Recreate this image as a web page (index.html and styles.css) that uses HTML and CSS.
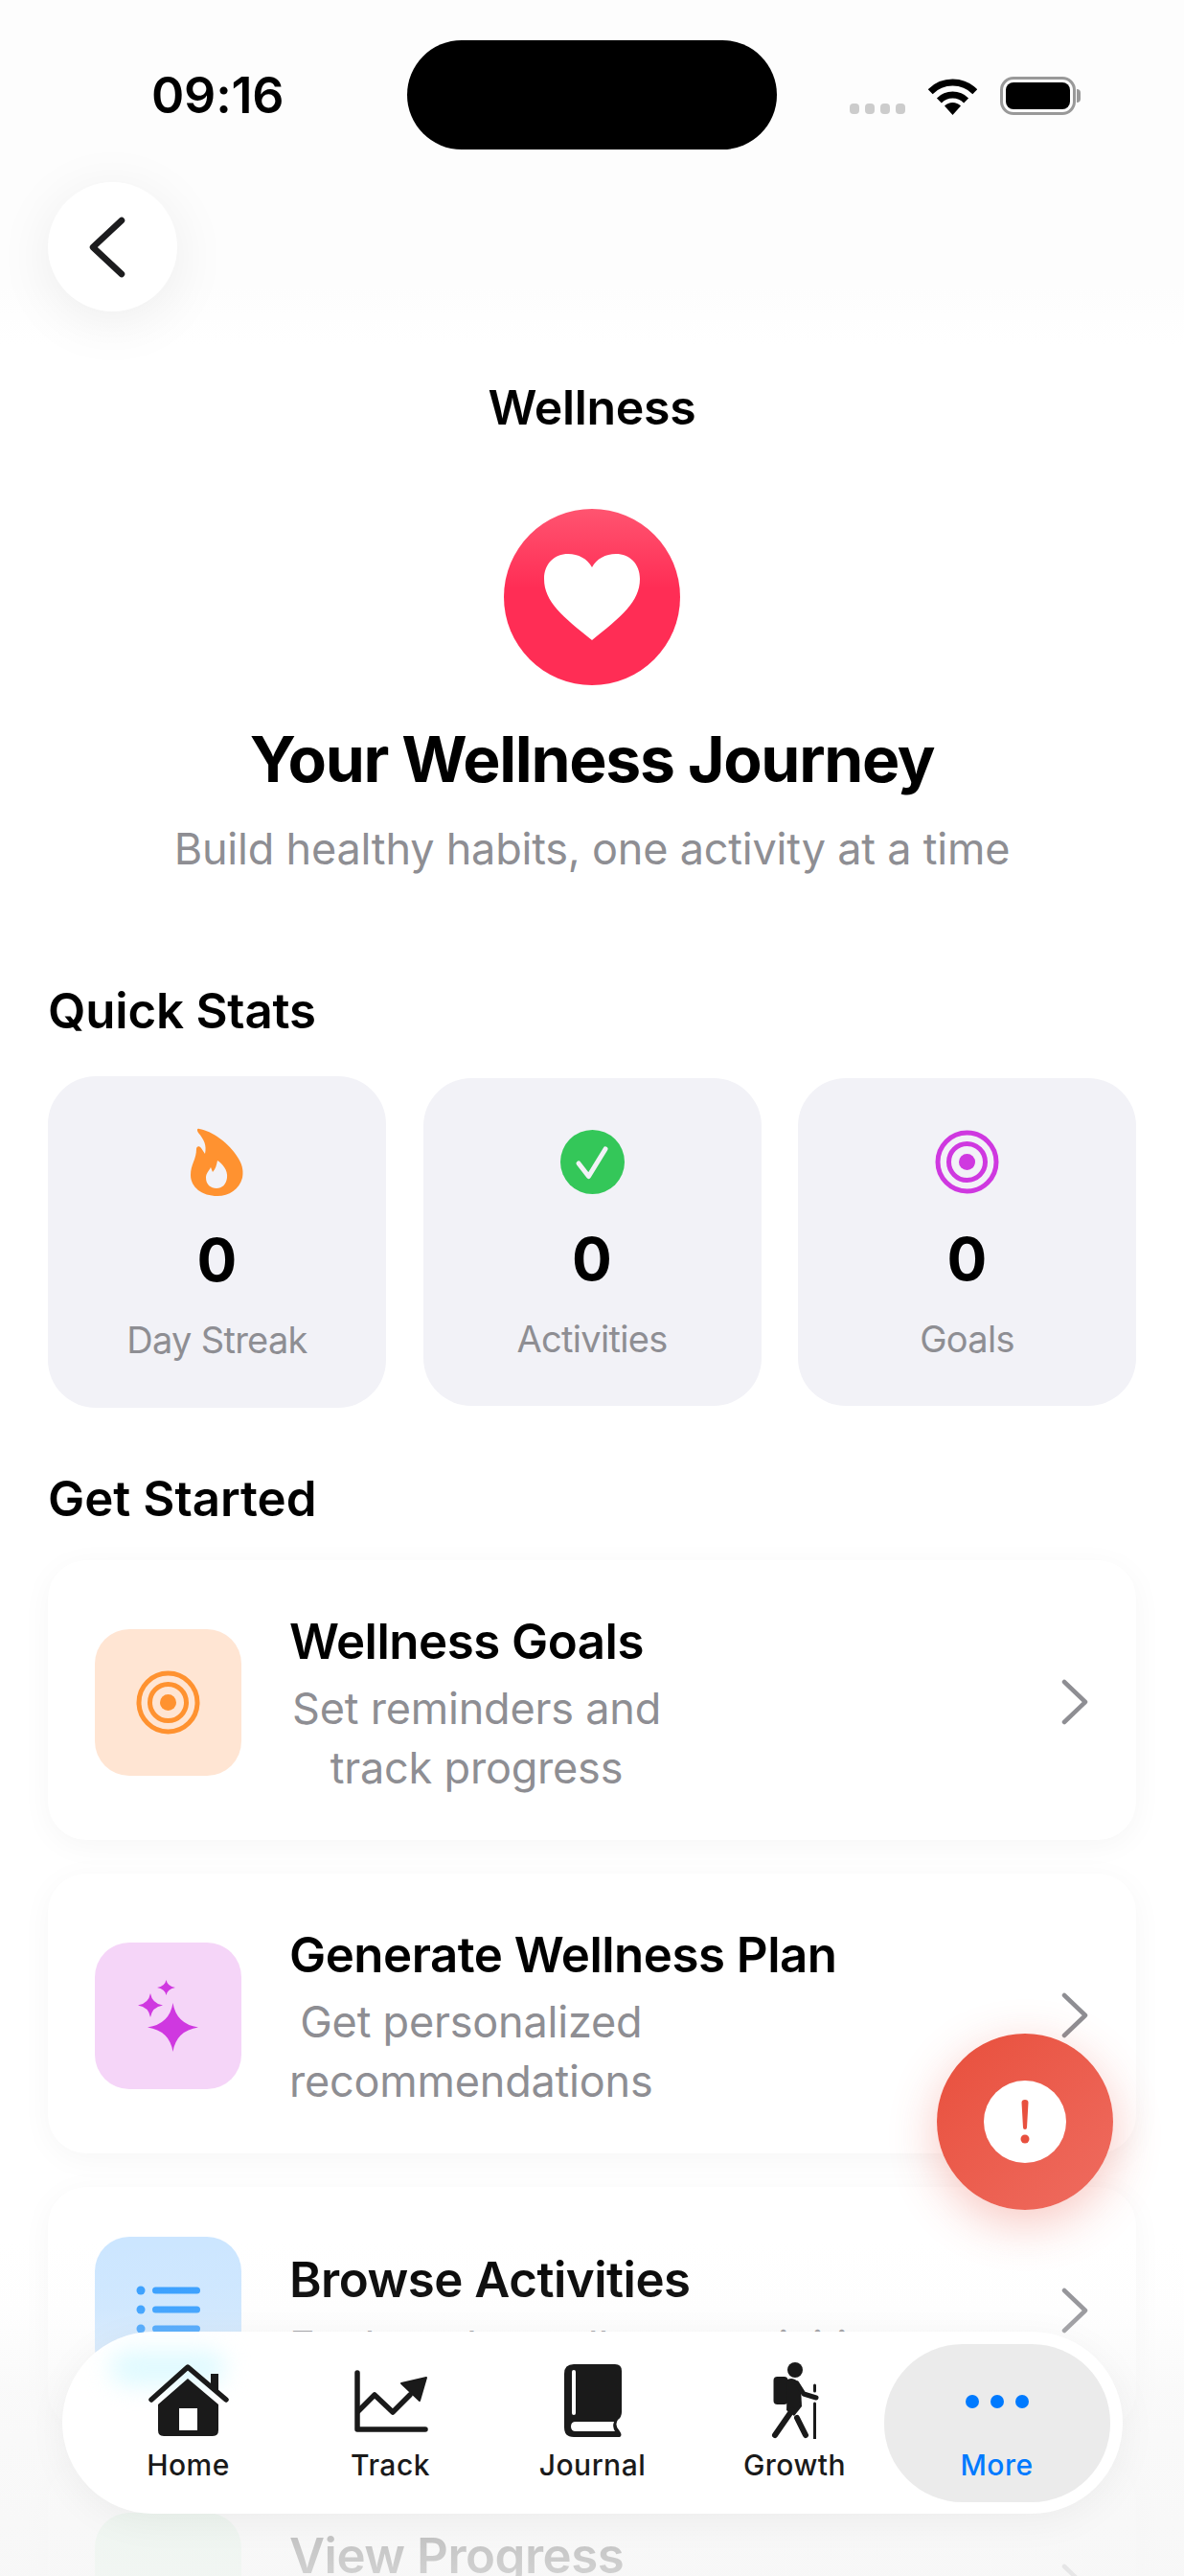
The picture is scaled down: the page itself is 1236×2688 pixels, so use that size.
FILE: index.html
```html
<!DOCTYPE html>
<html lang="en">
<head>
  <meta charset="UTF-8" />
  <meta name="viewport" content="width=device-width, initial-scale=1.0"/>
  <title>Wellness</title>
  <link rel="stylesheet" href="styles.css">
</head>
<body>
  <div class="screen">
    <!-- Status bar -->
    <header class="status">
      <span class="clock">09:16</span>
      <div class="island"></div>
      <div class="status-right">
        <div class="signal"><i></i><i></i><i></i><i></i></div>
        <svg class="wifi" width="51" height="38" viewBox="0 0 51 38">
          <path d="M2.2 13.7A33 33 0 0 1 48.8 13.7M11.4 22.9A20 20 0 0 1 39.6 22.9" fill="none" stroke="#000" stroke-width="7"/>
          <path d="M25.5 38L17 28.5A12 12 0 0 1 34 28.5Z" fill="#000"/>
        </svg>
        <div class="battery"><div class="battery-fill"></div></div>
      </div>
    </header>

    <button class="back" type="button" aria-label="Back">
      <svg width="40" height="66" viewBox="0 0 40 66">
        <path d="M34 5L4 33L34 61" fill="none" stroke="#1c1c1e" stroke-width="6.500" stroke-linecap="round" stroke-linejoin="round"/>
      </svg>
    </button>

    <h2 class="nav-title">Wellness</h2>

    <!-- Hero -->
    <section class="hero">
      <div class="hero-icon">
        <svg width="100" height="90" viewBox="0 0 100 90">
          <path d="M50 90C20 66 0 50 0 26C0 10 11 0 25 0C36 0 45 5 50 14C55 5 64 0 75 0C89 0 100 10 100 26C100 50 80 66 50 90Z" fill="#fff"/>
        </svg>
      </div>
      <h1>Your Wellness Journey</h1>
      <p>Build healthy habits, one activity at a time</p>
    </section>

    <!-- Quick stats -->
    <h3 class="section-title stats-title">Quick Stats</h3>
    <div class="stats">
      <div class="stat stat-first">
        <svg class="stat-icon" width="55" height="71" viewBox="0 0 55 71">
          <path fill="#ff9230" fill-rule="evenodd" d="M9 1C22 3 40 15 50 32C55 40 55 47 54 52C51 64 40 71 28 71C12 71 0 62 0 49C0 38 6 33 6 22C6 19 9 18 11 21L15 27C17 18 14 12 8 5C6 2 7 0 9 1ZM28 34C33 37 39 44 38 52C37 59 33 63 27 63C21 63 16 59 16 52C16 47 19 45 21 41L23 46C26 43 27 39 28 34Z"/>
        </svg>
        <strong>0</strong>
        <span>Day Streak</span>
      </div>
      <div class="stat">
        <svg class="stat-icon" width="67" height="67" viewBox="0 0 67 67">
          <circle cx="33.5" cy="33.5" r="33.5" fill="#34c759"/>
          <path d="M19 35L29.5 48.500L47 20" fill="none" stroke="#f2f2f7" stroke-width="5" stroke-linecap="round" stroke-linejoin="round"/>
        </svg>
        <strong>0</strong>
        <span>Activities</span>
      </div>
      <div class="stat">
        <svg class="stat-icon" width="67" height="67" viewBox="0 0 67 67">
          <circle cx="33.5" cy="33.5" r="30.500" fill="none" stroke="#cf38e0" stroke-width="5"/>
          <circle cx="33.5" cy="33.5" r="19" fill="none" stroke="#cf38e0" stroke-width="5"/>
          <circle cx="33.5" cy="33.5" r="8.500" fill="#cf38e0"/>
        </svg>
        <strong>0</strong>
        <span>Goals</span>
      </div>
    </div>

    <!-- Get started -->
    <h3 class="section-title started-title">Get Started</h3>
    <div class="cards">
      <a class="card">
        <div class="tile tile-orange">
          <svg width="67" height="67" viewBox="0 0 67 67">
            <circle cx="33.5" cy="33.5" r="30.500" fill="none" stroke="#ff9230" stroke-width="5"/>
            <circle cx="33.5" cy="33.5" r="19" fill="none" stroke="#ff9230" stroke-width="5"/>
            <circle cx="33.5" cy="33.5" r="8.500" fill="#ff9230"/>
          </svg>
        </div>
        <div class="card-text">
          <h4>Wellness Goals</h4>
          <p class="sub-wide">Set reminders and<br>track progress</p>
        </div>
        <svg class="chevron" width="28" height="48" viewBox="0 0 28 48">
          <path d="M3 3L25 24L3 45" fill="none" stroke="#8e8e93" stroke-width="4.500" stroke-linecap="round" stroke-linejoin="round"/>
        </svg>
      </a>

      <a class="card">
        <div class="tile tile-pink">
          <svg width="63" height="75" viewBox="0 0 63 75" fill="#cf38e0">
            <path d="M36.500 24Q40 46 63 49.500Q40 53 36.500 75Q33 53 10 49.500Q33 46 36.500 24Z"/>
            <path d="M13 14Q14.800 24.700 26 26.500Q14.800 28.300 13 39Q11.200 28.300 0 26.500Q11.200 24.700 13 14Z"/>
            <path d="M29.500 0Q30.800 6.700 39 8Q30.800 9.300 29.500 16Q28.200 9.300 20 8Q28.200 6.700 29.500 0Z"/>
          </svg>
        </div>
        <div class="card-text">
          <h4>Generate Wellness Plan</h4>
          <p>Get personalized<br>recommendations</p>
        </div>
        <svg class="chevron" width="28" height="48" viewBox="0 0 28 48">
          <path d="M3 3L25 24L3 45" fill="none" stroke="#8e8e93" stroke-width="4.500" stroke-linecap="round" stroke-linejoin="round"/>
        </svg>
      </a>

      <a class="card">
        <div class="tile tile-blue">
          <svg width="68" height="52" viewBox="0 0 68 52" fill="#2f9bff">
            <circle cx="5" cy="5" r="4.500"/><rect x="17" y="1.500" width="50" height="7" rx="3.500"/>
            <circle cx="5" cy="25" r="4.500"/><rect x="17" y="21.500" width="50" height="7" rx="3.500"/>
            <circle cx="5" cy="45" r="4.500"/><rect x="17" y="41.500" width="50" height="7" rx="3.500"/>
          </svg>
        </div>
        <div class="card-text">
          <h4>Browse Activities</h4>
          <p class="sub-left">Explore the wellness activities</p>
        </div>
        <svg class="chevron" width="28" height="48" viewBox="0 0 28 48">
          <path d="M3 3L25 24L3 45" fill="none" stroke="#8e8e93" stroke-width="4.500" stroke-linecap="round" stroke-linejoin="round"/>
        </svg>
      </a>

      <a class="card">
        <div class="tile tile-green"></div>
        <div class="card-text">
          <h4>View Progress</h4>
        </div>
        <svg class="chevron" width="28" height="48" viewBox="0 0 28 48">
          <path d="M3 3L25 24L3 45" fill="none" stroke="#8e8e93" stroke-width="4.500" stroke-linecap="round" stroke-linejoin="round"/>
        </svg>
      </a>
    </div>

    <!-- Floating bits -->
    <div class="fade"></div>

    <button class="fab" type="button" aria-label="Report">
      <span class="fab-dot">
        <svg width="10" height="46" viewBox="0 0 10 46" fill="#e8503f">
          <path d="M1.500 3A3.500 3 0 0 1 8.500 3L7 29A2 2 0 0 1 3 29Z"/>
          <circle cx="5" cy="41" r="4.500"/>
        </svg>
      </span>
    </button>

    <nav class="tabbar">
      <div class="tint"></div>
      <a class="tab">
        <svg width="86" height="76" viewBox="0 0 86 76" fill="#1a1a1a">
          <path d="M66 10H74V30L66 24Z"/>
          <path d="M4 37L42 3L82 37" fill="none" stroke="#1a1a1a" stroke-width="5.500" stroke-linecap="round" stroke-linejoin="round"/>
          <path fill-rule="evenodd" d="M42 15L74 42V69Q74 75 68 75H17Q11 75 11 69V42ZM33 46V69H52V46Z"/>
        </svg>
        <span>Home</span>
      </a>
      <a class="tab">
        <svg width="80" height="76" viewBox="0 0 80 76">
          <path d="M5 9V68H76" fill="none" stroke="#1a1a1a" stroke-width="5.500" stroke-linecap="round" stroke-linejoin="round"/>
          <path d="M6 49L23 32L42 50L60 32" fill="none" stroke="#1a1a1a" stroke-width="5.500" stroke-linecap="round" stroke-linejoin="round"/>
          <path d="M51 20L77 14L70 38Z" fill="#1a1a1a" stroke="#1a1a1a" stroke-width="2" stroke-linejoin="round"/>
        </svg>
        <span>Track</span>
      </a>
      <a class="tab">
        <svg width="60" height="76" viewBox="0 0 60 76">
          <path fill="#1a1a1a" d="M10 0H53Q60 0 60 7V50Q60 55 56 58Q52 64 58 70Q61 74 58 76H10Q0 76 0 66V10Q0 0 10 0Z"/>
          <rect x="8" y="6" width="4" height="47" rx="2" fill="#fff"/>
          <path fill="#fff" d="M12 60H52Q50 65 53 70H12Q7 70 7 65Q7 60 12 60Z"/>
        </svg>
        <span>Journal</span>
      </a>
      <a class="tab">
        <svg width="52" height="80" viewBox="0 0 52 80" fill="#1a1a1a">
          <circle cx="26" cy="8" r="8"/>
          <rect x="3.500" y="15" width="15" height="29" rx="4"/>
          <path d="M18 18C24 15 30 19 32 26L33 46L25 56L17 50Z"/>
          <path d="M28 22L35 33L48 37" fill="none" stroke="#1a1a1a" stroke-width="5" stroke-linecap="round" stroke-linejoin="round"/>
          <path d="M23 50L5 76M28 58L37 76" fill="none" stroke="#1a1a1a" stroke-width="6" stroke-linecap="round"/>
          <path d="M46.500 43V80M46.500 24V30" fill="none" stroke="#1a1a1a" stroke-width="3" stroke-linecap="round"/>
        </svg>
        <span>Growth</span>
      </a>
      <a class="tab tab-active">
        <svg width="66" height="76" viewBox="0 0 66 76" fill="#007aff">
          <circle cx="7" cy="39" r="7"/><circle cx="33" cy="39" r="7"/><circle cx="59" cy="39" r="7"/>
        </svg>
        <span>More</span>
      </a>
    </nav>
  </div>
</body>
</html>
```

FILE: styles.css
```css
:root {
  --text-color: #000;
  --muted-color: #8e8e93;
  --tile-radius: 36px;
  --font-sans: Inter, "Noto Sans", sans-serif;
}

html, body {
  margin: 0;
  padding: 0;
  background: #fff;
}

.screen {
  position: relative;
  width: 1236px;
  height: 2688px;
  overflow: hidden;
  font-family: var(--font-sans);
  color: var(--text-color);
  background: linear-gradient(#fdfdfd 0, #fdfdfd 300px, #fff 360px);
}

h1, h2, h3, h4, p {
  margin: 0;
}

/* Status bar */
.status {
  display: flex;
  align-items: flex-start;
  height: 114px;
  padding: 42px 0 0 158px;
}

.clock {
  width: 267px;
  margin-top: 30px;
  font-size: 52px;
  line-height: 56px;
  font-weight: 600;
  letter-spacing: -0.2px;
}

.island {
  width: 386px;
  height: 114px;
  border-radius: 57px;
  background: #000;
}

.status-right {
  display: flex;
  align-items: flex-end;
  height: 78px;
  margin-left: 76px;
}

.signal {
  display: flex;
  gap: 6px;
  margin-bottom: 1px;
}

.signal i {
  width: 10px;
  height: 11px;
  border-radius: 4px;
  background: #ccc;
}

.wifi {
  margin-left: 24px;
}

.battery {
  position: relative;
  box-sizing: border-box;
  width: 79px;
  height: 40px;
  margin-left: 24px;
  padding: 3px;
  border: 3px solid #999;
  border-radius: 14px;
}

.battery::after {
  content: "";
  position: absolute;
  right: -8px;
  top: 10px;
  width: 4px;
  height: 14px;
  border-radius: 0 4px 4px 0;
  background: #999;
}

.battery-fill {
  height: 100%;
  border-radius: 8px;
  background: #000;
}

/* Header */
.back {
  display: flex;
  align-items: center;
  justify-content: center;
  width: 135px;
  height: 135px;
  margin: 34px 0 0 50px;
  padding: 0 10px 0 0;
  border: none;
  border-radius: 50%;
  background: #fff;
  box-shadow: 0 10px 60px rgba(0, 0, 0, 0.07);
}

.nav-title {
  margin-top: 70px;
  text-align: center;
  font-size: 50px;
  line-height: 60px;
  font-weight: 600;
  letter-spacing: -0.3px;
}

.hero {
  display: flex;
  flex-direction: column;
  align-items: center;
  margin-top: 76px;
}

.hero-icon {
  display: flex;
  align-items: center;
  justify-content: center;
  width: 184px;
  height: 184px;
  border-radius: 50%;
  background: linear-gradient(#ff5470, #ff2d55 45%);
}

.hero h1 {
  margin-top: 37px;
  font-size: 66px;
  line-height: 80px;
  font-weight: 700;
  letter-spacing: -1.3px;
}

.hero p {
  margin-top: 27px;
  font-size: 45px;
  line-height: 54px;
  letter-spacing: -0.2px;
  color: var(--muted-color);
}

.section-title {
  margin-left: 50px;
  font-size: 51px;
  line-height: 60px;
  font-weight: 600;
  letter-spacing: -0.2px;
}

.stats-title {
  margin-top: 112px;
}

.started-title {
  margin-top: 65px;
  letter-spacing: 0;
}

/* Stat cards */
.stats {
  display: grid;
  grid-template-columns: repeat(3, 353px);
  gap: 38.5px;
  margin: 40px 0 0 50px;
}

.stat {
  display: flex;
  flex-direction: column;
  align-items: center;
  height: 342px;
  box-sizing: border-box;
  padding-top: 54px;
  border-radius: 50px;
  background: #f2f2f7;
}

.stat-first {
  height: 346px;
  margin-top: -2px;
}

.stat strong {
  margin-top: 30px;
  font-size: 62px;
  line-height: 76px;
  font-weight: 700;
}

.stat-first strong {
  margin-top: 29px;
}

.stat span {
  margin-top: 20px;
  font-size: 38px;
  line-height: 50px;
  letter-spacing: -0.7px;
  color: var(--muted-color);
}

/* Action cards */
.cards {
  display: flex;
  flex-direction: column;
  gap: 35px;
  margin: 34px 50px 0;
}

.card {
  display: flex;
  align-items: center;
  padding: 48px 50px 48px 49px;
  border-radius: 40px;
  background: #fff;
  box-shadow: 0 6px 32px rgba(0, 0, 0, 0.04);
}

.tile {
  display: flex;
  flex-shrink: 0;
  align-items: center;
  justify-content: center;
  width: 153px;
  height: 153px;
  margin-top: 4px;
  border-radius: var(--tile-radius);
}

.tile-orange { background: #ffe5d3; }
.tile-pink { background: #f5d5f8; }
.tile-blue { background: #cce6ff; }
.tile-green { background: #d6f4de; }

.chevron {
  margin-top: 4px;
}

.card-text {
  display: flex;
  flex: 1;
  flex-direction: column;
  align-items: flex-start;
  box-sizing: border-box;
  min-height: 138px;
  margin: 0 0 -4px 50px;
  padding-top: 6px;
}

.card-text h4 {
  font-size: 51px;
  line-height: 62px;
  font-weight: 600;
  letter-spacing: -0.5px;
}

.card-text p {
  margin-top: 8px;
  font-size: 45px;
  line-height: 62px;
  letter-spacing: -0.2px;
  text-align: center;
  color: var(--muted-color);
}

.sub-wide {
  min-width: 391px;
}

.card-text .sub-left {
  text-align: left;
}

/* Overlays */
.fade {
  position: absolute;
  left: 0;
  right: 0;
  bottom: 0;
  height: 350px;
  background: linear-gradient(rgba(246, 246, 246, 0), rgba(246, 246, 246, 0.1) 20%, rgba(246, 246, 246, 0.6) 45%, rgba(246, 246, 246, 0.85));
}

.fab {
  position: absolute;
  left: 978px;
  top: 2122px;
  display: flex;
  align-items: center;
  justify-content: center;
  width: 184px;
  height: 184px;
  padding: 0;
  border: none;
  border-radius: 50%;
  background: linear-gradient(135deg, #e84f3c, #ef6c60);
  box-shadow: 0 14px 50px rgba(232, 80, 63, 0.32);
}

.fab-dot {
  display: flex;
  align-items: center;
  justify-content: center;
  width: 86px;
  height: 86px;
  border-radius: 50%;
  background: #fff;
}

.tabbar {
  position: absolute;
  left: 65px;
  top: 2433px;
  display: flex;
  justify-content: center;
  align-items: center;
  box-sizing: border-box;
  width: 1107px;
  height: 190px;
  border-radius: 95px;
  background: #fff;
  box-shadow: 0 8px 40px rgba(0, 0, 0, 0.05);
  overflow: hidden;
}

.tint {
  position: absolute;
  left: 50px;
  top: 20px;
  width: 120px;
  height: 36px;
  border-radius: 18px;
  background: #dffaff;
  filter: blur(12px);
}

.tab {
  position: relative;
  display: flex;
  flex-direction: column;
  flex-shrink: 0;
  align-items: center;
  justify-content: flex-end;
  box-sizing: border-box;
  width: 236px;
  height: 165px;
  margin: 0 -12.5px;
  padding-bottom: 19px;
  border-radius: 82px;
  color: #1a1a1a;
}

.tab svg {
  height: 80px;
}

.tab span {
  margin-top: 7px;
  font-size: 30px;
  line-height: 40px;
  font-weight: 500;
  letter-spacing: 0.5px;
}

.tab-active {
  background: #ebebeb;
  color: #007aff;
}
```
